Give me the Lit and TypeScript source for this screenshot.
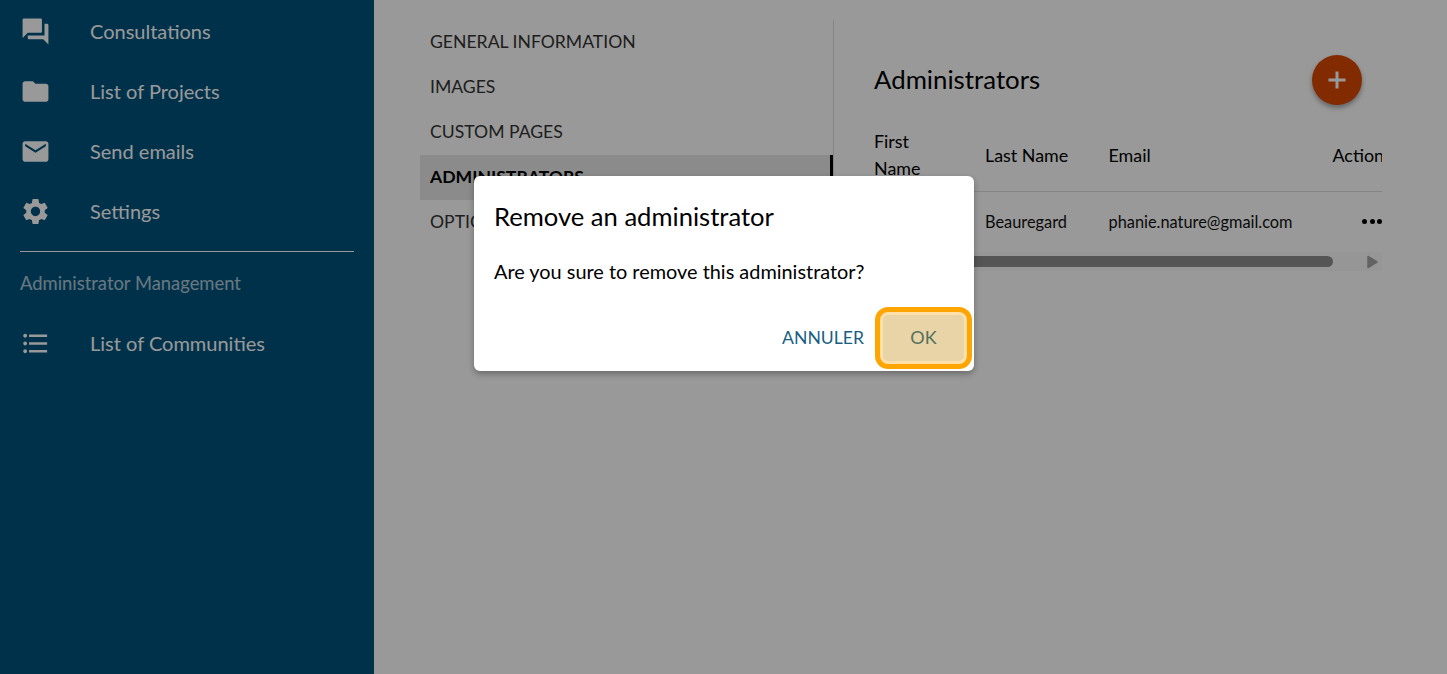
import { LitElement, html, css, svg } from "lit";
import { customElement } from "lit/decorators.js";

const icons: Record<string, unknown> = {
  forum: svg`<path d="M21 6h-2v9H6v2c0 .55.45 1 1 1h11l4 4V7c0-.55-.45-1-1-1zm-4 6V3c0-.55-.45-1-1-1H3c-.55 0-1 .45-1 1v14l4-4h10c.55 0 1-.45 1-1z"/>`,
  folder: svg`<path d="M10 4H4c-1.1 0-1.99.9-1.99 2L2 18c0 1.1.9 2 2 2h16c1.1 0 2-.9 2-2V8c0-1.1-.9-2-2-2h-8l-2-2z"/>`,
  mail: svg`<path d="M20 4H4c-1.1 0-1.99.9-1.99 2L2 18c0 1.1.9 2 2 2h16c1.1 0 2-.9 2-2V6c0-1.1-.9-2-2-2zm0 4l-8 5-8-5V6l8 5 8-5v2z"/>`,
  gear: svg`<path d="M19.14 12.94c.04-.3.06-.61.06-.94 0-.32-.02-.64-.07-.94l2.03-1.58c.18-.14.23-.41.12-.61l-1.92-3.32c-.12-.22-.37-.29-.59-.22l-2.39.96c-.5-.38-1.03-.7-1.62-.94l-.36-2.54c-.04-.24-.24-.41-.48-.41h-3.84c-.24 0-.43.17-.47.41l-.36 2.54c-.59.24-1.13.57-1.62.94l-2.39-.96c-.22-.08-.47 0-.59.22L2.74 8.87c-.12.21-.08.47.12.61l2.03 1.58c-.05.3-.09.63-.09.94s.02.64.07.94l-2.03 1.58c-.18.14-.23.41-.12.61l1.92 3.32c.12.22.37.29.59.22l2.39-.96c.5.38 1.03.7 1.62.94l.36 2.54c.05.24.24.41.48.41h3.84c.24 0 .44-.17.47-.41l.36-2.54c.59-.24 1.13-.56 1.62-.94l2.39.96c.22.08.47 0 .59-.22l1.92-3.32c.12-.22.07-.47-.12-.61l-2.01-1.58zM12 15.6c-1.98 0-3.6-1.62-3.6-3.6s1.62-3.6 3.6-3.6 3.6 1.62 3.6 3.6-1.62 3.6-3.6 3.6z"/>`,
  list: svg`<path d="M4 10.5c-.83 0-1.5.67-1.5 1.5s.67 1.5 1.5 1.5 1.5-.67 1.5-1.5-.67-1.5-1.5-1.5zm0-6c-.83 0-1.5.67-1.5 1.5S3.17 7.5 4 7.5 5.500 6.830 5.500 6 4.830 4.500 4 4.500zm0 12c-.83 0-1.5.68-1.5 1.500s.68 1.500 1.500 1.500 1.500-.68 1.500-1.500-.67-1.500-1.500-1.500zM7 19h14v-2H7v2zm0-6h14v-2H7v2zm0-8v2h14V5H7z"/>`,
};

const icon = (name: string) =>
  html`<svg class="icon" viewBox="0 0 24 24" fill="currentColor">${icons[name]}</svg>`;

@customElement("app-root")
export class AppRoot extends LitElement {
  static styles = css`
    :host {
      display: block;
      position: relative;
      width: 1447px;
      height: 674px;
      overflow: hidden;
      font-family: Lato, "Liberation Sans", sans-serif;
      color: #000;
      background: #fff;
    }
    .page {
      display: flex;
      height: 100%;
    }
    .side {
      flex: none;
      width: 374px;
      height: 100%;
      background: #00527d;
      color: #fff;
      padding-top: 1px;
      box-sizing: border-box;
    }
    .nav {
      display: flex;
      align-items: center;
      height: 60px;
      padding-left: 19.5px;
      font-size: 20px;
    }
    .icon {
      flex: none;
      width: 31px;
      height: 31px;
    }
    .nav span {
      margin-left: 39.5px;
    }
    .rule {
      height: 1px;
      margin: 10px 20px 0;
      background: #fff;
    }
    .group {
      height: 61px;
      display: flex;
      align-items: center;
      padding-left: 20px;
      font-size: 18.4px;
      color: #ffffff;
      opacity: 0.68;
    }
    .main {
      flex: 1;
      display: flex;
      padding: 20px 65px 0 46px;
      min-width: 0;
    }
    .tabs {
      flex: none;
      width: 414px;
      height: 225px;
      box-sizing: border-box;
      border-right: 1px solid #ddd;
    }
    .tab {
      height: 45px;
      box-sizing: border-box;
      display: flex;
      align-items: center;
      padding: 0 0 2px 10px;
      font-size: 17.6px;
      color: #333;
    }
    .tab.active {
      background: #e8e8e8;
      color: #000;
      font-weight: 700;
      border-right: 3px solid #000;
    }
    .content {
      flex: 1;
      min-width: 0;
      padding-left: 40px;
    }
    .head {
      display: flex;
      align-items: center;
      justify-content: space-between;
      height: 50px;
      margin-top: 35px;
      padding-right: 20px;
    }
    h2 {
      margin: 0;
      padding-bottom: 2px;
      font-size: 25.8px;
      font-weight: 400;
    }
    .fab {
      width: 50px;
      height: 50px;
      border: 0;
      border-radius: 50%;
      padding: 0;
      background: #d94600;
      color: #fff;
      display: flex;
      align-items: center;
      justify-content: center;
      box-shadow: 0 3px 5px rgba(0, 0, 0, 0.35);
    }
    .fab svg {
      width: 18px;
      height: 18px;
    }
    .table {
      display: grid;
      grid-template-columns: 111px 123.5px 224px 1fr;
      overflow: hidden;
      margin-top: 14px;
      height: 133px;
      align-content: start;
    }
    .th {
      font-size: 17.9px;
      line-height: 27px;
      display: flex;
      align-items: center;
      height: 72px;
      border-bottom: 1px solid #ddd;
      white-space: nowrap;
    }
    .th .wrap {
      white-space: normal;
      width: 60px;
    }
    .td {
      font-size: 16.35px;
      height: 60px;
      padding-bottom: 2px;
      box-sizing: border-box;
      display: flex;
      align-items: center;
      color: #111;
      white-space: nowrap;
    }
    .dots {
      display: flex;
      gap: 2.5px;
      margin-left: 29.5px;
    }
    .dots i {
      width: 5px;
      height: 5px;
      border-radius: 50%;
      background: #000;
    }
    .scroll {
      display: flex;
      align-items: center;
      height: 19px;
      background: #fbfbfb;
    }
    .thumb {
      width: 459px;
      height: 11px;
      border-radius: 6px;
      background: #8e8e8e;
    }
    .arrow {
      flex: none;
      margin-left: 33.5px;
      width: 11px;
      height: 14px;
      color: #a6a6a6;
    }
    .overlay {
      position: absolute;
      inset: 0;
      background: rgba(0, 0, 0, 0.4);
    }
    .dialog {
      position: absolute;
      left: 474px;
      top: 176px;
      width: 500px;
      height: 195px;
      box-sizing: border-box;
      background: #fff;
      border-radius: 6px;
      box-shadow: 0 3px 6px rgba(0, 0, 0, 0.3);
      display: flex;
      flex-direction: column;
    }
    .dialog h3 {
      margin: 0;
      padding: 23px 20px 0;
      font-size: 25.6px;
      line-height: 34px;
      font-weight: 400;
    }
    .dialog p {
      margin: 0;
      padding: 24px 20px 0;
      font-size: 19.9px;
      line-height: 28px;
    }
    .actions {
      margin-top: auto;
      display: flex;
      align-items: center;
      justify-content: flex-end;
      gap: 11px;
      padding: 0 2px 2px 0;
    }
    button {
      font: inherit;
    }
    .cancel {
      border: 0;
      background: none;
      padding: 0 0 2px;
      font-size: 17.6px;
      color: #1a5f82;
    }
    .ok {
      width: 97px;
      height: 62px;
      box-sizing: border-box;
      border: 5px solid #ffa500;
      border-radius: 13px;
      background: #e8d4a6;
      box-shadow: inset 0 0 0 3px #ffe0a8;
      color: #56705f;
      font-size: 18px;
      padding: 0 0 2px;
    }
  `;

  render() {
    const navTop = [
      ["forum", "Consultations"],
      ["folder", "List of Projects"],
      ["mail", "Send emails"],
      ["gear", "Settings"],
    ];
    return html`
      <div class="page">
        <aside class="side">
          ${navTop.map(
            ([i, t]) => html`<div class="nav">${icon(i)}<span>${t}</span></div>`
          )}
          <div class="rule"></div>
          <div class="group">Administrator Management</div>
          <div class="nav">${icon("list")}<span>List of Communities</span></div>
        </aside>
        <main class="main">
          <nav class="tabs">
            <div class="tab">GENERAL INFORMATION</div>
            <div class="tab">IMAGES</div>
            <div class="tab">CUSTOM PAGES</div>
            <div class="tab active">ADMINISTRATORS</div>
            <div class="tab">OPTIONS</div>
          </nav>
          <section class="content">
            <div class="head">
              <h2>Administrators</h2>
              <button class="fab" aria-label="Add">
                <svg viewBox="0 0 18 18" fill="currentColor"><path d="M7.500 .5h3v7h7v3h-7v7h-3v-7h-7v-3h7z"/></svg>
              </button>
            </div>
            <div class="table">
              <div class="th"><span class="wrap">First Name</span></div>
              <div class="th">Last Name</div>
              <div class="th">Email</div>
              <div class="th">Actions</div>
              <div class="td">Stéphanie</div>
              <div class="td">Beauregard</div>
              <div class="td">phanie.nature@gmail.com</div>
              <div class="td"><div class="dots"><i></i><i></i><i></i></div></div>
            </div>
            <div class="scroll">
              <div class="thumb"></div>
              <svg class="arrow" viewBox="0 0 11 14" fill="currentColor" stroke="currentColor" stroke-width="1.5" stroke-linejoin="round"><path d="M1 1.500L10 7 1 12.500z"/></svg>
            </div>
          </section>
        </main>
      </div>
      <div class="overlay"></div>
      <div class="dialog" role="dialog">
        <h3>Remove an administrator</h3>
        <p>Are you sure to remove this administrator?</p>
        <div class="actions">
          <button class="cancel">ANNULER</button>
          <button class="ok">OK</button>
        </div>
      </div>
    `;
  }
}
